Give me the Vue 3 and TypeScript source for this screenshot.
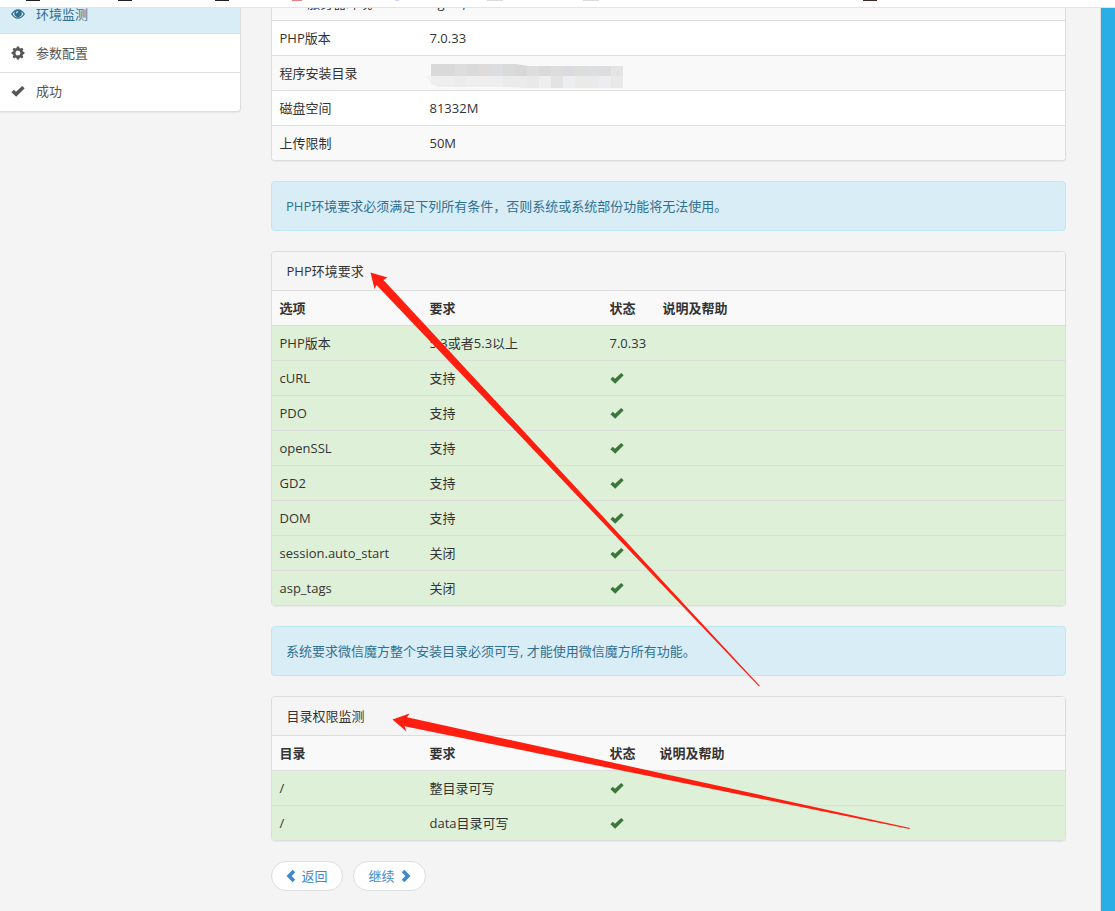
<script setup lang="ts">
interface Row { name: string; need: string; state?: string }

const info: Row[] = [
  { name: 'WEB服务器环境', need: 'nginx,' },
  { name: 'PHP版本', need: '7.0.33' },
  { name: '程序安装目录', need: '' },
  { name: '磁盘空间', need: '81332M' },
  { name: '上传限制', need: '50M' },
]

const env: Row[] = [
  { name: 'PHP版本', need: '5.3或者5.3以上', state: '7.0.33' },
  { name: 'cURL', need: '支持' },
  { name: 'PDO', need: '支持' },
  { name: 'openSSL', need: '支持' },
  { name: 'GD2', need: '支持' },
  { name: 'DOM', need: '支持' },
  { name: 'session.auto_start', need: '关闭' },
  { name: 'asp_tags', need: '关闭' },
]

const dirs: Row[] = [
  { name: '/', need: '整目录可写' },
  { name: '/', need: 'data目录可写' },
]

const topTiles = ['#d9d9d9', '#d9d9d9', '#dedddd', '#dadada', '#dedcda', '#dcdde0', '#dadada', '#d8d8d8', '#dddddd', '#dadada', '#dddddb', '#dadae0', '#dcdedd', '#dcdfe1', '#dddddd', '#e4e4e4']
const bottomTiles = ['#eeeeee', '#eeeeee', '#eeecea', '#eeeeee', '#eeeeee', '#eeeeee', '#ebebeb', '#ebebeb', '#e9e9e9', '#eeeeee', '#e2e4e3', '#eceef1', '#eaeae8', '#eaeaea', '#ecedf0', '#e8e8e8']
</script>

<template>
  <div class="page">
    <div class="browser-bar">
      <i class="mark m1"></i><i class="mark m2"></i><i class="mark m3"></i>
      <i class="mark m4"></i><i class="mark m5"></i><i class="mark m6"></i><i class="mark m7"></i><i class="mark m8"></i>
    </div>
    <div class="viewport">
      <aside class="steps">
        <div class="step active">
          <svg class="ico" viewBox="0 0 14 14"><path fill-rule="evenodd" d="M0 7Q3 2.300 7 2.300T14 7Q11 11.700 7 11.700T0 7ZM1.500 7Q3.700 10.500 7 10.500T12.500 7Q11.600 5.500 10.100 4.500A3.700 3.700 0 1 1 3.900 4.500Q2.400 5.500 1.500 7ZM7 4.200A1.700 1.700 0 0 0 5.100 6.100L6 6.500Q6 5.200 7.400 5Z"/></svg>
          <span>环境监测</span>
        </div>
        <div class="step">
          <svg class="ico" viewBox="0 0 14 14"><path fill-rule="evenodd" d="M5.900.6h2.200l.4 1.600 1 .4 1.400-.9 1.500 1.500-.9 1.400.4 1 1.500.3v2.200l-1.500.4-.4 1 .9 1.400-1.500 1.500-1.400-.9-1 .4-.4 1.500H5.900l-.4-1.500-1-.4-1.400.9-1.500-1.500.9-1.400-.4-1L.6 8.100V5.900l1.500-.3.4-1-.9-1.400 1.500-1.500 1.400.9 1-.4ZM7 4.500A2.500 2.500 0 1 0 7 9.500A2.500 2.500 0 0 0 7 4.500Z"/></svg>
          <span>参数配置</span>
        </div>
        <div class="step">
          <svg class="ico" viewBox="0 0 14 14"><path d="M.4 8.300 2.800 5.700 5 7.800 11.200 1.900 13.700 4.200 5.200 12.800Z"/></svg>
          <span>成功</span>
        </div>
      </aside>

      <main class="content">
        <section class="panel first">
          <div v-for="row in info" :key="row.name" class="row info-row">
            <span>{{ row.name }}</span>
            <span v-if="row.need">{{ row.need }}</span>
            <span v-else class="redacted">
              <span class="tiles upper"><i v-for="(c, i) in topTiles" :key="i" :style="{ background: c }"></i></span>
              <span class="tiles lower"><i v-for="(c, i) in bottomTiles" :key="i" :style="{ background: c }"></i></span>
            </span>
          </div>
        </section>

        <div class="alert">PHP环境要求必须满足下列所有条件，否则系统或系统部份功能将无法使用。</div>

        <section class="panel">
          <header class="heading">PHP环境要求</header>
          <div class="row head"><b>选项</b><b>要求</b><b>状态</b><b>说明及帮助</b></div>
          <div v-for="row in env" :key="row.name" class="row ok">
            <span>{{ row.name }}</span><span>{{ row.need }}</span>
            <span v-if="row.state">{{ row.state }}</span>
            <svg v-else class="ico check" viewBox="0 0 14 14"><path d="M.4 8.300 2.800 5.700 5 7.800 11.200 1.900 13.700 4.200 5.200 12.800Z"/></svg>
          </div>
        </section>

        <div class="alert">系统要求微信魔方整个安装目录必须可写, 才能使用微信魔方所有功能。</div>

        <section class="panel dirs">
          <header class="heading">目录权限监测</header>
          <div class="row head"><b>目录</b><b>要求</b><b>状态</b><b>说明及帮助</b></div>
          <div v-for="row in dirs" :key="row.need" class="row ok">
            <span>{{ row.name }}</span><span>{{ row.need }}</span>
            <svg class="ico check" viewBox="0 0 14 14"><path d="M.4 8.300 2.800 5.700 5 7.800 11.200 1.900 13.700 4.200 5.200 12.800Z"/></svg>
          </div>
        </section>

        <nav class="pager">
          <a><svg class="chev" viewBox="0 0 10 14"><path d="M6.600.8 9.300 3.300 5.700 7 9.300 10.700 6.600 13.200.5 7Z"/></svg>返回</a>
          <a>继续<svg class="chev" viewBox="0 0 10 14"><path d="M3.400.8 .7 3.300 4.300 7 .7 10.700 3.400 13.200 9.500 7Z"/></svg></a>
        </nav>
      </main>
      <div class="edge"></div>
    </div>

    <svg class="arrows" viewBox="0 0 1115 911">
      <path d="M370.500 272.500 387.500 277.500 383.500 280 760 686 759 686.500 376.500 285 374.500 289Z"/>
      <path d="M392.500 719.500 409.500 713.500 407 717.300 910 828 909.500 829 404.500 726.300 406.500 731.500Z"/>
    </svg>
  </div>
</template>

<style>
html, body { margin: 0; background: #f4f4f4; overflow: hidden; }
</style>

<style scoped>
.page { position: relative; height: 911px; overflow: hidden; display: flex; flex-direction: column; background: #f4f4f4; color: #333; font: 13px/20px "Open Sans", "Noto Sans CJK SC", sans-serif; }
.browser-bar { position: relative; z-index: 1; flex: none; box-sizing: border-box; height: 8px; background: #fff; border-bottom: 1px solid #e4e4e4; }
.mark { position: absolute; top: 0; height: 1px; width: 14px; background: #222; }
.m1 { left: 26px; } .m2 { left: 118px; } .m3 { left: 215px; }
.m4 { left: 292px; width: 10px; background: #ec8080; } .m5 { left: 395px; width: 4px; background: #ccd8fb; }
.m6 { left: 487px; width: 16px; background: #dcdce4; } .m7 { left: 583px; width: 16px; background: #dcdce4; }
.m8 { left: 863px; background: #402a2a; }
.viewport { flex: none; height: 903px; display: grid; grid-template-columns: 241px 30px 795px 35px 14px; overflow: hidden; }
.steps { box-sizing: border-box; height: 104px; border-right: 1px solid #ddd; border-bottom: 1px solid #ddd; border-radius: 0 0 4px 0; box-shadow: 0 1px 1px rgba(0,0,0,.05); background: #fff; overflow: hidden; }
.step { box-sizing: border-box; height: 39px; display: flex; align-items: center; gap: 11px; padding: 0 0 1px 11px; border-bottom: 1px solid #ddd; color: #555; }
.step.active { height: 26px; padding-bottom: 13px; background: #d9edf7; color: #31708f; }
.step:last-child { border-bottom: 0; padding-bottom: 3px; }
.ico { display: block; width: 14px; height: 14px; fill: currentColor; flex: none; }
.content { grid-column: 3; min-width: 0; }
.panel { box-sizing: border-box; margin-bottom: 20px; border: 1px solid #ddd; border-radius: 4px; background: #fff; overflow: hidden; box-shadow: 0 1px 1px rgba(0,0,0,.05); }
.panel.first { height: 153px; border-top: 0; border-radius: 0 0 4px 4px; display: flex; flex-direction: column; justify-content: flex-end; }
.row { box-sizing: border-box; flex: none; height: 35px; display: grid; grid-template-columns: 150px 180px 53px 1fr; align-items: center; padding: 0 0 1px 7.5px; border-top: 1px solid #ddd; white-space: nowrap; }
.dirs .row { grid-template-columns: 150px 180px 50px 1fr; }
.info-row:nth-child(odd), .head { background: #f9f9f9; }
.ok { background: #dff0d8; }
.heading { height: 38px; line-height: 38px; padding-left: 14.5px; background: #f5f5f5; }
.check { color: #3c763d; }
.alert { box-sizing: border-box; height: 50px; margin-bottom: 20px; padding: 14px; line-height: 20px; border: 1px solid #bce8f1; border-radius: 4px; background: #d9edf7; color: #31708f; }
.redacted { display: block; width: 192px; margin: 7px 0 0 1.5px; }
.tiles { display: flex; height: 12px; }
.tiles i { flex: 1; }
.upper { clip-path: polygon(0 0, 85px 0, 97px 2px, 100% 2px, 100% 100%, 0 100%); }
.lower { margin-left: -5px; padding-left: 5px; background: linear-gradient(90deg, #f3f2f1 5px, transparent 5px); clip-path: polygon(0 0, 100% 0, 100% 100%, 100px 100%, 75px 11px, 12px 11px, 5px 8px); }
.pager { display: flex; gap: 10px; }
.pager a { box-sizing: border-box; height: 30px; width: 72px; display: flex; align-items: center; justify-content: center; gap: 5px; padding-bottom: 1px; border: 1px solid #ddd; border-radius: 15px; background: #fff; color: #428bca; }
.pager a:last-child { width: 73px; gap: 6px; }
.chev { width: 10px; height: 14px; fill: currentColor; }
.edge { grid-column: 5; background: #29aee6; box-shadow: -1px 0 #ddd; }
.arrows { position: absolute; z-index: 2; inset: 0; width: 1115px; height: 911px; fill: #ff1f11; pointer-events: none; }
</style>
